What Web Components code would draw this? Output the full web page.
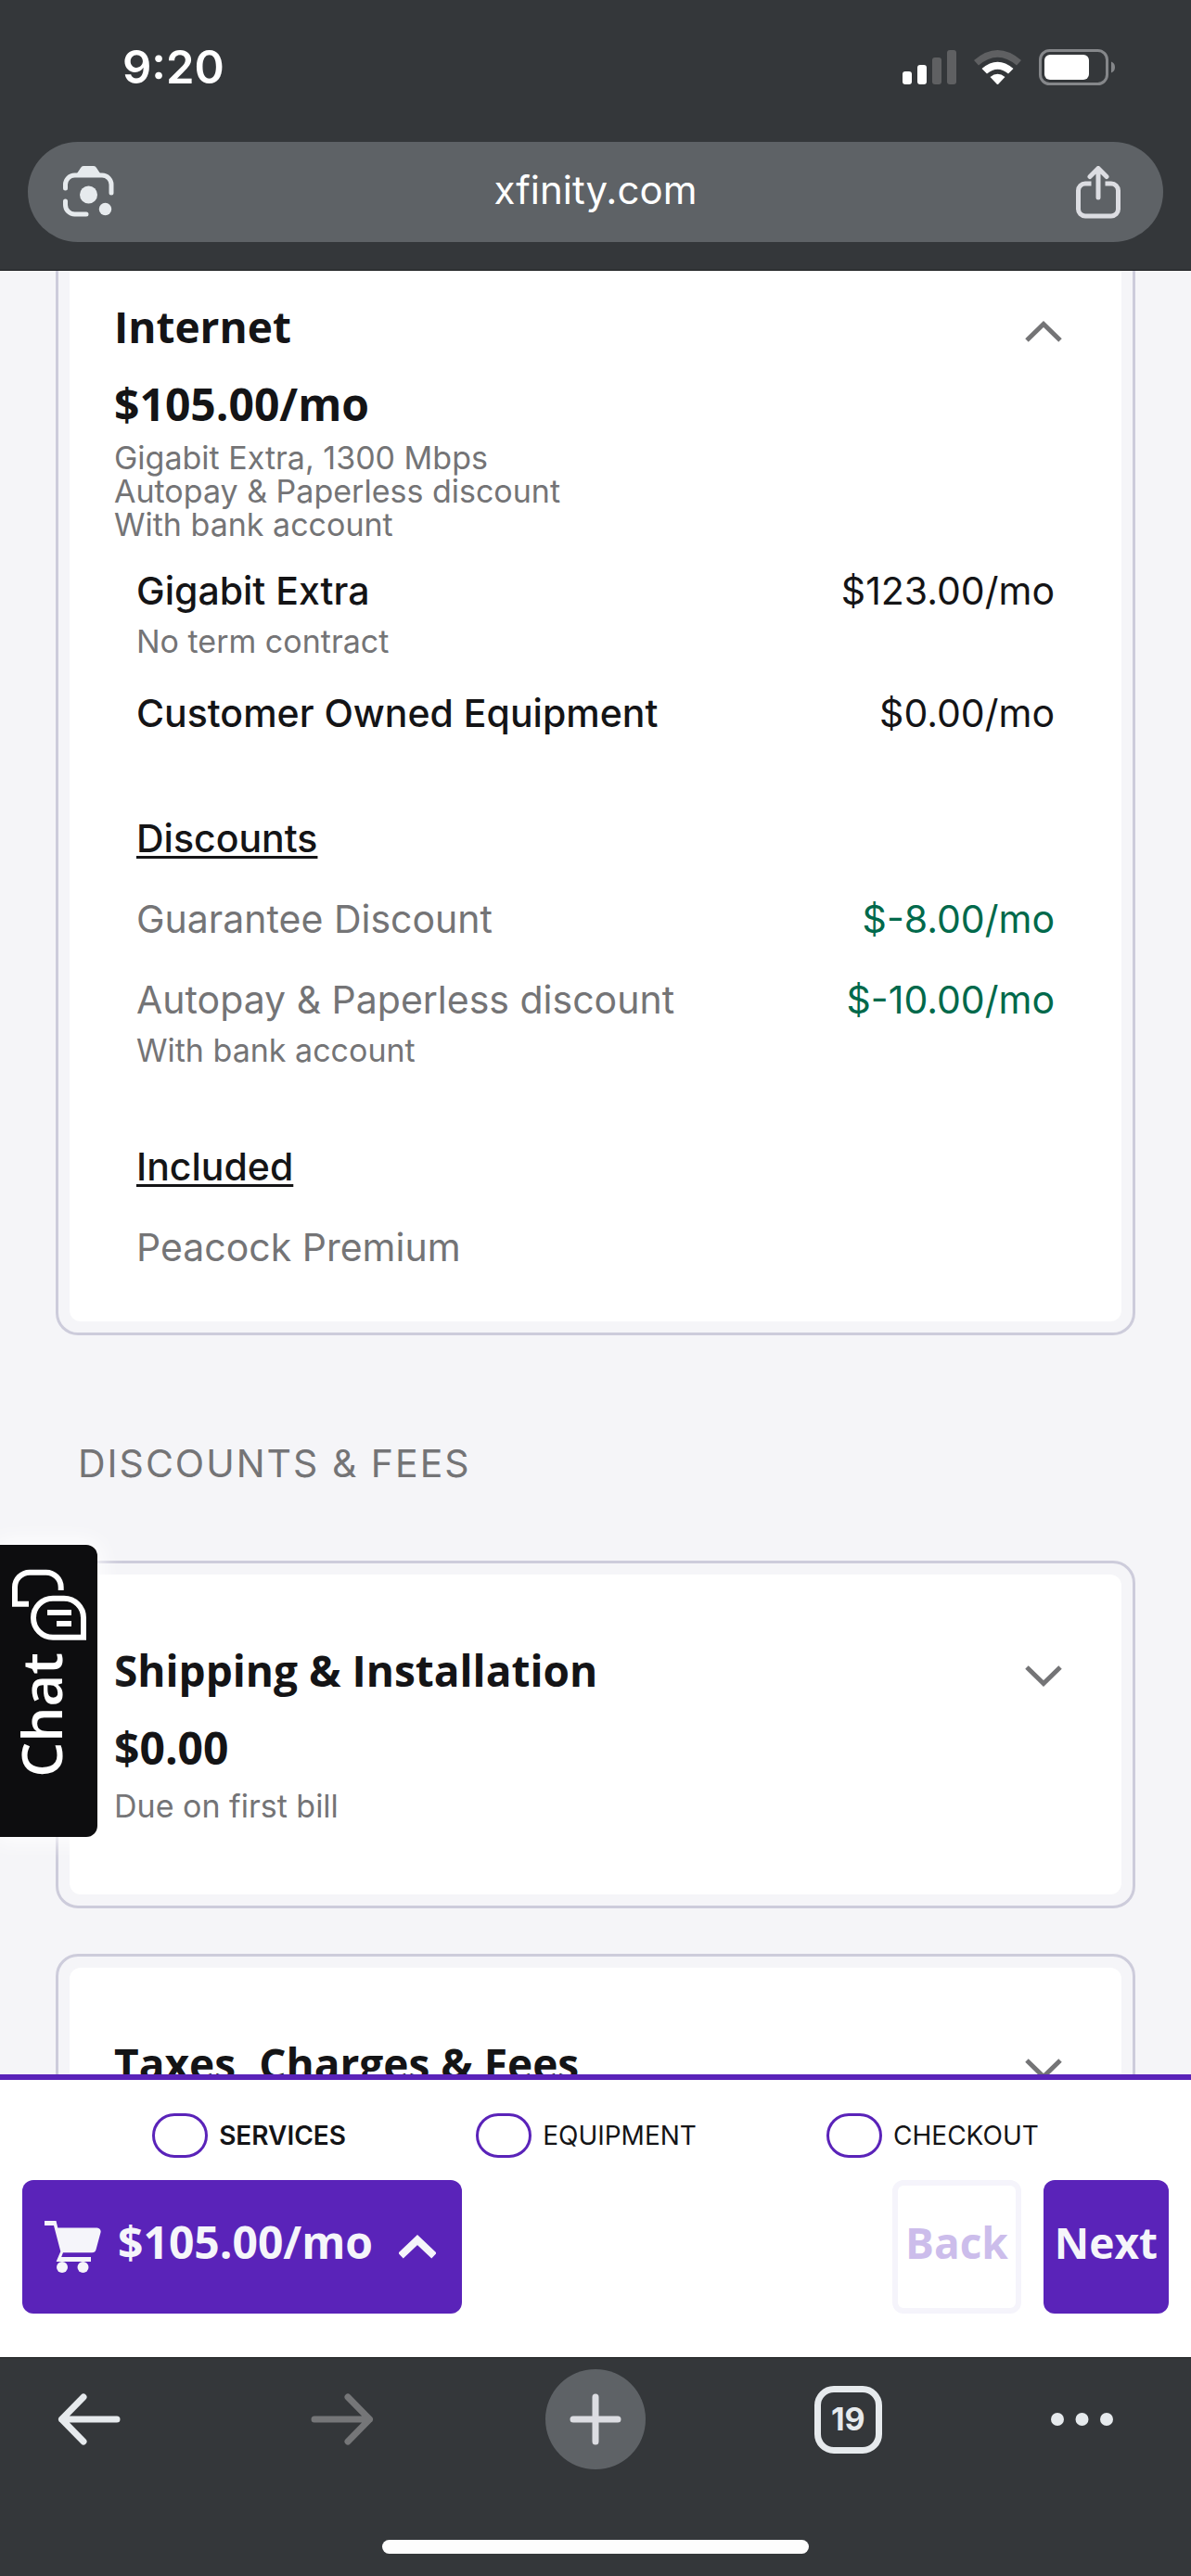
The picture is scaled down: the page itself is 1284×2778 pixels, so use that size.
<!DOCTYPE html>
<html lang="en">
<head>
<meta charset="utf-8">
<meta name="viewport" content="width=device-width, initial-scale=1">
<title>xfinity.com</title>
<style>
  :root {
    --ink: #141416;
    --muted: #747476;
    --page: #f5f5f8;
    --line: #cdccdb;
    --brand: #5a23b9;
    --green: #00694b;
    --chrome: #34373a;
    --chrome-field: #5e6266;
    --chrome-icon: #e6eaed;
    --body-font: Inter, "Liberation Sans", sans-serif;
    --head-font: "Open Sans", "Noto Sans", sans-serif;
  }
  body { margin: 0; background: var(--page); color: var(--ink); font-family: var(--body-font); }
</style>
</head>
<body>
<app-shell>
  <phone-status slot="top" time="9:20"></phone-status>
  <address-bar slot="top" host="xfinity.com"></address-bar>

  <bill-card continued expanded>
    <span slot="title">Internet</span>
    <span slot="price">$105.00/mo</span>
    <bill-note tight>Gigabit Extra, 1300 Mbps</bill-note>
    <bill-note tight>Autopay &amp; Paperless discount</bill-note>
    <bill-note tight>With bank account</bill-note>
    <bill-group slot="details">
      <bill-line strong>Gigabit Extra<span slot="amount">$123.00/mo</span><span slot="note">No term contract</span></bill-line>
      <bill-line strong>Customer Owned Equipment<span slot="amount">$0.00/mo</span></bill-line>
    </bill-group>
    <bill-group slot="details">
      <span slot="heading">Discounts</span>
      <bill-line credit>Guarantee Discount<span slot="amount">$-8.00/mo</span></bill-line>
      <bill-line credit>Autopay &amp; Paperless discount<span slot="amount">$-10.00/mo</span><span slot="note">With bank account</span></bill-line>
    </bill-group>
    <bill-group slot="details">
      <span slot="heading">Included</span>
      <bill-line>Peacock Premium</bill-line>
    </bill-group>
  </bill-card>

  <section-title>DISCOUNTS &amp; FEES</section-title>

  <bill-card>
    <span slot="title">Shipping &amp; Installation</span>
    <span slot="price">$0.00</span>
    <bill-note>Due on first bill</bill-note>
  </bill-card>

  <bill-card>
    <span slot="title">Taxes, Charges &amp; Fees</span>
  </bill-card>

  <chat-tab slot="overlay">Chat</chat-tab>
  <checkout-bar slot="bottom" total="$105.00/mo"></checkout-bar>
  <browser-toolbar slot="bottom" tabs="19"></browser-toolbar>
</app-shell>

<script>
  const define = (name, html, setup) => {
    const template = document.createElement('template');
    template.innerHTML = html;
    customElements.define(name, class extends HTMLElement {
      constructor() {
        super();
        this.attachShadow({ mode: 'open' }).append(template.content.cloneNode(true));
      }
      connectedCallback() {
        if (setup) setup(this.shadowRoot, this);
      }
    });
  };

  define('app-shell', `
    <style>
      :host { display: flex; flex-direction: column; height: 100vh; position: relative; }
      header { flex: none; background: var(--chrome); border-bottom: 1px solid #17191b; }
      main { flex: 1; min-height: 0; overflow: hidden; padding: 0 60px; }
      footer { flex: none; }
    </style>
    <header><slot name="top"></slot></header>
    <main><slot></slot></main>
    <slot name="overlay"></slot>
    <footer><slot name="bottom"></slot></footer>
  `);

  define('phone-status', `
    <style>
      :host { display: flex; align-items: center; justify-content: space-between; height: 145px; padding: 0 82px 0 132px; color: #fff; }
      time { font-size: 49px; line-height: 60px; font-weight: 600; }
      .icons { display: flex; align-items: center; gap: 19px; }
      svg { display: block; }
    </style>
    <time></time>
    <div class="icons">
      <svg width="58" height="37" viewBox="0 0 58 37" aria-label="Signal">
        <rect x="0" y="23" width="10" height="14" rx="3" fill="#fff"/>
        <rect x="16" y="16" width="10" height="21" rx="3" fill="#fff"/>
        <rect x="32" y="8" width="10" height="29" rx="3" fill="#5f6062"/>
        <rect x="48" y="0" width="10" height="37" rx="3" fill="#5f6062"/>
      </svg>
      <svg width="51" height="37" viewBox="0 0 51 37" aria-label="Wi-Fi">
        <path d="M0 11Q25.500 -11 51 11L46 16.500Q25.500 -1 5 16.500Z" fill="#5f6062"/>
        <path d="M8.500 20Q25.500 5.500 42.500 20L37 25.500Q25.500 16 14 25.500Z" fill="#fff"/>
        <path d="M17.500 29Q25.500 22.500 33.500 29L25.500 37.500Z" fill="#fff"/>
      </svg>
      <svg width="82" height="39" viewBox="0 0 82 39" aria-label="Battery">
        <rect x="1.500" y="1.500" width="72" height="36" rx="10" fill="none" stroke="#85878a" stroke-width="3"/>
        <rect x="6" y="6" width="48" height="27" rx="6" fill="#fff"/>
        <path d="M78 13.500a6.500 6.500 0 0 1 0 12Z" fill="#85878a"/>
      </svg>
    </div>
  `, (root, el) => { root.querySelector('time').textContent = el.getAttribute('time'); });

  define('address-bar', `
    <style>
      :host { display: block; padding: 8px 30px 30px; }
      form { display: flex; align-items: center; height: 108px; border-radius: 54px; background: var(--chrome-field); padding: 0 40px 0 36px; }
      button { all: unset; display: grid; place-items: center; width: 60px; height: 60px; }
      input { flex: 1; min-width: 0; border: 0; padding: 0 0 4px 4px; background: none; color: #fff; text-align: center; font: 400 42px/60px var(--body-font); outline: 0; }
    </style>
    <form>
      <button type="button" aria-label="Search with camera">
        <svg width="56" height="56" viewBox="0 0 56 56" fill="none" stroke="#e6eaed" stroke-width="5" stroke-linecap="round">
          <path d="M2.500 24V20a10 10 0 0 1 10-10H42a10 10 0 0 1 10 10V29"/>
          <path d="M2.500 38v4a10 10 0 0 0 10 10H25"/>
          <path d="M15 8L19 2Q20 0 22 0H33Q35 0 36 2L40 8Z" fill="#e6eaed" stroke="none"/>
          <circle cx="27.500" cy="31" r="9.500" fill="#e6eaed" stroke="none"/>
          <circle cx="45.500" cy="46.500" r="6.700" fill="#e6eaed" stroke="none"/>
        </svg>
      </button>
      <input type="text" aria-label="Address">
      <button type="button" aria-label="Share">
        <svg width="48" height="57" viewBox="0 0 48 57" fill="none" stroke="#dcdde2" stroke-width="5">
          <path d="M16.500 19H10a7.500 7.500 0 0 0-7.500 7.500V46.500A7.500 7.500 0 0 0 10 54H38a7.500 7.500 0 0 0 7.500-7.500V26.500A7.500 7.500 0 0 0 38 19H31.500"/>
          <path d="M24 34V3M15 11.500L24 2.500L33 11.500" stroke-linecap="round" stroke-linejoin="round"/>
        </svg>
      </button>
    </form>
  `, (root, el) => { root.querySelector('input').value = el.getAttribute('host'); });

  define('bill-card', `
    <style>
      :host { display: block; border: 3px solid var(--line); border-radius: 24px; padding: 12px; margin-bottom: 49px; }
      :host([continued]) { border-top: 0; border-top-left-radius: 0; border-top-right-radius: 0; padding-top: 0; margin-bottom: 0; }
      .body { background: #fff; border-radius: 12px; padding: 73px 48px; }
      :host([continued]) .body { border-radius: 0 0 12px 12px; padding: 30px 48px 48px; }
      .head { display: flex; justify-content: space-between; }
      h3, p { margin: 0; font: 700 46px/60px var(--head-font); }
      p { margin: 24px 0 10px; font-size: 48px; }
      button { all: unset; box-sizing: border-box; display: grid; place-items: center; width: 72px; height: 60px; padding-top: 12px; }
      :host([expanded]) svg { transform: scaleY(-1); }
      .details { display: flex; flex-direction: column; gap: 72px; padding: 22px 24px 0; }
      .empty { display: none; }
    </style>
    <div class="body">
      <div class="head">
        <h3><slot name="title"></slot></h3>
        <button type="button" aria-label="Toggle details">
          <svg width="40" height="24" viewBox="0 0 40 24" fill="none" stroke="#747476" stroke-width="5"><path d="M2 3L20 20.500L38 3"/></svg>
        </button>
      </div>
      <p><slot name="price"></slot></p>
      <slot></slot>
      <div class="details"><slot name="details"></slot></div>
    </div>
  `, (root, el) => {
    root.querySelector('p').classList.toggle('empty', !el.querySelector('[slot=price]'));
    root.querySelector('.details').classList.toggle('empty', !el.querySelector('[slot=details]'));
  });

  define('bill-note', `
    <style>
      :host { display: block; color: var(--muted); font-size: 34px; line-height: 45px; }
      :host([tight]) { line-height: 36px; }
    </style>
    <slot></slot>
  `);

  define('bill-group', `
    <style>
      :host { display: flex; flex-direction: column; gap: 24px; }
      h4 { margin: 0; font-size: 41px; line-height: 63px; font-weight: 500; text-decoration: underline; text-decoration-thickness: 3px; text-underline-offset: 4px; text-decoration-skip-ink: none; }
      h4.empty { display: none; }
    </style>
    <h4><slot name="heading"></slot></h4>
    <slot></slot>
  `, (root, el) => {
    root.querySelector('h4').classList.toggle('empty', !el.querySelector('[slot=heading]'));
  });

  define('bill-line', `
    <style>
      :host { display: block; font-size: 41px; line-height: 63px; color: var(--muted); }
      :host([strong]) .name { color: var(--ink); font-weight: 500; }
      .row { display: flex; justify-content: space-between; gap: 24px; }
      .amount { color: var(--ink); }
      :host([credit]) .amount { color: var(--green); }
      .note { color: var(--muted); font-size: 34px; line-height: 45px; }
    </style>
    <div class="row"><span class="name"><slot></slot></span><span class="amount"><slot name="amount"></slot></span></div>
    <div class="note"><slot name="note"></slot></div>
  `);

  define('section-title', `
    <style>
      :host { display: block; padding: 107px 24px 73px; }
      h2 { margin: 0; color: var(--muted); font-size: 41px; line-height: 63px; font-weight: 400; letter-spacing: 2px; }
    </style>
    <h2><slot></slot></h2>
  `);

  define('chat-tab', `
    <style>
      :host { display: block; position: absolute; left: 0; top: 1666px; }
      button { all: unset; display: flex; flex-direction: column; align-items: flex-start; width: 105px; height: 315px; border-radius: 0 12px 12px 0; background: #0d0d0f; color: #fff; box-shadow: 0 0 24px 4px #fff; }
      svg { display: block; }
      span { writing-mode: vertical-rl; transform: rotate(180deg); font: 600 60px/88px var(--head-font); }
    </style>
    <button type="button">
      <svg width="105" height="116" viewBox="0 0 105 116" fill="none" stroke="#fff" stroke-width="6" aria-hidden="true">
        <path d="M65.700 49V45.700a16 16 0 0 0-16-16H32a16 16 0 0 0-16 16V63.700H31"/>
        <path d="M90 99.700H57a21 21 0 0 1-21-21a21 21 0 0 1 21-21H69a21 21 0 0 1 21 21Z"/>
        <path d="M51 73H77M61 85H77"/>
      </svg>
      <span><slot></slot></span>
    </button>
  `);

  define('checkout-bar', `
    <style>
      :host { display: block; background: #fff; border-top: 6px solid var(--brand); padding: 36px 24px 47px; }
      .steps { display: flex; justify-content: space-evenly; margin-bottom: 24px; }
      label { display: flex; align-items: center; gap: 12px; font-size: 28px; line-height: 48px; }
      label.current { font-weight: 600; }
      input { appearance: none; box-sizing: border-box; margin: 0; width: 60px; height: 48px; border: 3px solid var(--brand); border-radius: 24px; }
      .actions { display: flex; gap: 24px; }
      button { all: unset; box-sizing: border-box; display: flex; align-items: center; height: 144px; padding: 0 12px 10px; border-radius: 12px; background: var(--brand); color: #f5f5fa; font: 700 46px/60px var(--head-font); }
      .cart { padding: 0 24px 10px; gap: 18px; min-width: 474px; margin-right: auto; font-size: 48px; }
      .cart svg { flex: none; margin-top: 10px; }
      .cart svg:last-child { margin: 10px 4px 0 auto; }
      .back { border: 6px solid #f5f4fb; padding: 0 8px 10px; background: #fff; color: #ccbdeb; }
    </style>
    <div class="steps">
      <label class="current"><input type="radio" name="step">SERVICES</label>
      <label><input type="radio" name="step">EQUIPMENT</label>
      <label><input type="radio" name="step">CHECKOUT</label>
    </div>
    <div class="actions">
      <button type="button" class="cart">
        <svg width="61" height="57" viewBox="0 0 61 57" fill="#f5f5fa" aria-hidden="true">
          <path d="M0 0H12.500L14.300 7.500H56.500A4 4 0 0 1 60.500 12.500L55.500 31A4.500 4.500 0 0 1 51 34.300H20L18.200 39H50V44H12.600L17.300 33L10 5H0Z"/>
          <circle cx="19" cy="50" r="6"/><circle cx="41.500" cy="50" r="6"/>
        </svg>
        <span class="total"></span>
        <svg width="40" height="26" viewBox="2 2 40 26" fill="none" stroke="#f5f5fa" stroke-width="8" aria-hidden="true"><path d="M4 24.500L22 7.500L40 24.500"/></svg>
      </button>
      <button type="button" class="back">Back</button>
      <button type="button">Next</button>
    </div>
  `, (root, el) => { root.querySelector('.total').textContent = el.getAttribute('total'); });

  define('browser-toolbar', `
    <style>
      :host { display: block; background: var(--chrome); border-top: 1px solid #17191b; padding: 12px 0 24px; }
      nav { display: flex; justify-content: space-between; padding: 0 84px 0 42px; }
      button { all: unset; display: grid; place-items: center; width: 108px; height: 108px; color: var(--chrome-icon); }
      .new { border-radius: 54px; background: var(--chrome-field); }
      .count { box-sizing: border-box; display: grid; place-items: center; width: 73px; height: 73px; border: 7px solid currentColor; border-radius: 21px; font-size: 34px; line-height: 36px; font-weight: 700; }
      .more { width: 67px; }
      .home { width: 460px; height: 15px; margin: 76px auto 0; border-radius: 8px; background: #fdfdfd; }
    </style>
    <nav>
      <button type="button" aria-label="Back">
        <svg width="68" height="56" viewBox="0 0 68 56" fill="none" stroke="#e6eaed" stroke-width="7" stroke-linecap="round" stroke-linejoin="round"><path d="M64 28H4.500M28 4L4.500 28L28 52"/></svg>
      </button>
      <button type="button" aria-label="Forward">
        <svg width="68" height="56" viewBox="0 0 68 56" fill="none" stroke="#757678" stroke-width="7" stroke-linecap="round" stroke-linejoin="round"><path d="M4 28H63.500M40 4L63.500 28L40 52"/></svg>
      </button>
      <button type="button" class="new" aria-label="New tab">
        <svg width="56" height="56" viewBox="0 0 56 56" fill="none" stroke="#dcdde2" stroke-width="7" stroke-linecap="round"><path d="M4 28H52M28 4V52"/></svg>
      </button>
      <button type="button" aria-label="Tabs"><span class="count"></span></button>
      <button type="button" class="more" aria-label="More">
        <svg width="67" height="14" viewBox="0 0 67 14" fill="#e6eaed"><circle cx="7" cy="7" r="7"/><circle cx="33.500" cy="7" r="7"/><circle cx="60" cy="7" r="7"/></svg>
      </button>
    </nav>
    <div class="home"></div>
  `, (root, el) => { root.querySelector('.count').textContent = el.getAttribute('tabs'); });
</script>
</body>
</html>
